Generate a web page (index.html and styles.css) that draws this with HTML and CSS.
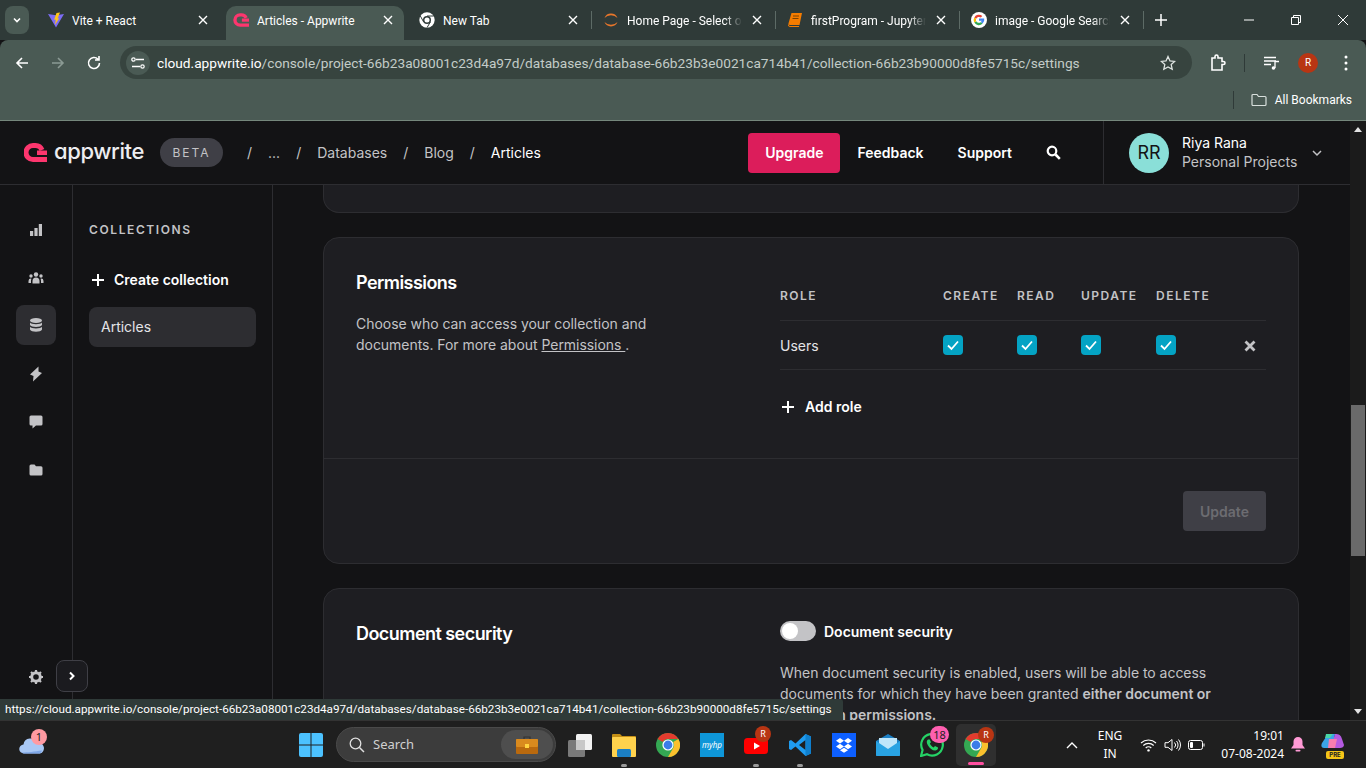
FILE: index.html
```html
<!DOCTYPE html>
<html lang="en">
<head>
  <meta charset="UTF-8" />
  <title>Articles - Appwrite</title>
  <link rel="stylesheet" href="styles.css">
</head>
<body>

  <svg class="defs" width="0" height="0">
    <symbol id="i-x" viewBox="0 0 10 10"><path d="M1 1l8 8M9 1l-8 8" fill="none" stroke="currentColor" stroke-width="1.4"/></symbol>
    <symbol id="i-chrome" viewBox="0 0 24 24">
      <circle cx="12" cy="12" r="12" fill="#34a853"/>
      <path d="M12 0a12 12 0 0 1 10.4 6H12a6 6 0 0 0-5.2 3L1.6 6A12 12 0 0 1 12 0z" fill="#e33b2e"/>
      <path d="M22.4 6A12 12 0 0 1 12 24l5.2-9a6 6 0 0 0 0-6z" fill="#fbc02d"/>
      <circle cx="12" cy="12" r="5.6" fill="#fff"/>
      <circle cx="12" cy="12" r="4.4" fill="#3b7de8"/>
    </symbol>
  </svg>

  <!-- Tab strip -->
  <div class="tabstrip">
    <div class="tab-menu"><svg width="10" height="10" viewBox="0 0 10 10"><path d="M2 3.5l3 3 3-3" fill="none" stroke="#fff" stroke-width="1.6"/></svg></div>
    <div class="tab tab-first">
      <svg class="tab-icon" viewBox="0 0 16 16"><path d="M0 2l8 13.5L16 2 8 3.2z" fill="#7c6cf5"/><path d="M8.5 1L12 .6 9.6 6.5l1.6-.3L7 13l.8-5.6-1.7.3z" fill="#ffc517"/></svg>
      <span class="tab-title">Vite + React</span>
      <svg class="tab-x"><use href="#i-x"/></svg>
    </div>
    <div class="tab tab-active">
      <svg class="tab-icon" viewBox="0 0 18 16"><path d="M18 13.800H8a5.800 5.800 0 0 1 0-11.600h1.500a5.800 5.800 0 0 1 5.300 3.400" fill="none" stroke="#fd366e" stroke-width="3.800"/><rect x="10" y="6.300" width="8" height="3.600" fill="#fd366e"/></svg>
      <span class="tab-title">Articles - Appwrite</span>
      <svg class="tab-x"><use href="#i-x"/></svg>
    </div>
    <div class="tab">
      <svg class="tab-icon" viewBox="0 0 24 24"><circle cx="12" cy="12" r="11.5" fill="#fff"/><circle cx="12" cy="12" r="6" fill="#2f3a38"/><circle cx="12" cy="12" r="3.800" fill="#fff"/><path d="M12 6h10M7 15L2 6M17 15l-5 8.500" stroke="#2f3a38" stroke-width="1.500"/></svg>
      <span class="tab-title">New Tab</span>
      <svg class="tab-x"><use href="#i-x"/></svg>
    </div>
    <div class="tab-sep"></div>
    <div class="tab">
      <svg class="tab-icon" viewBox="0 0 16 16"><path d="M1.5 6a7 7 0 0 1 13 0 9 9 0 0 0-13 0zM1.5 10a7 7 0 0 0 13 0 9 9 0 0 1-13 0z" fill="#e8762b"/></svg>
      <span class="tab-title tab-fade">Home Page - Select or create</span>
      <svg class="tab-x"><use href="#i-x"/></svg>
    </div>
    <div class="tab-sep"></div>
    <div class="tab">
      <svg class="tab-icon" viewBox="0 0 16 16"><path d="M4.5 1H15l-2.5 12H3a1.5 1.5 0 0 1-1.4-2z" fill="#f57c00"/><path d="M1.6 12.5a1.5 1.5 0 0 0 1.4 2h9" fill="none" stroke="#f57c00" stroke-width="1"/><path d="M6 4h6M5.5 6.5h6" stroke="#5a3200" stroke-width=".8"/></svg>
      <span class="tab-title tab-fade">firstProgram - Jupyter Notebook</span>
      <svg class="tab-x"><use href="#i-x"/></svg>
    </div>
    <div class="tab-sep"></div>
    <div class="tab">
      <svg class="tab-icon" viewBox="0 0 16 16"><circle cx="8" cy="8" r="8" fill="#fff"/><path d="M8 6.6h5.2a5.3 5.3 0 0 1-1.6 5L9.700 10a2.600 2.600 0 0 0 1-1.300H8z" fill="#4285f4"/><path d="M3.300 5.400l1.900 1.400a3 3 0 0 1 4.600-1.300l1.500-1.500a5.300 5.300 0 0 0-8 1.400z" fill="#ea4335"/><path d="M3.300 10.600l1.900-1.400a3 3 0 0 0 4.500 1l1.900 1.400a5.300 5.300 0 0 1-8.300-1z" fill="#34a853"/><path d="M3.300 5.400a5.300 5.300 0 0 0 0 5.200l1.900-1.400a3 3 0 0 1 0-2.400z" fill="#fbbc05"/></svg>
      <span class="tab-title tab-fade">image - Google Search</span>
      <svg class="tab-x"><use href="#i-x"/></svg>
    </div>
    <div class="tab-sep"></div>
    <svg class="tab-new" width="12" height="12" viewBox="0 0 12 12"><path d="M6 0v12M0 6h12" stroke="#fff" stroke-width="1.5"/></svg>
    <div class="win-btns">
      <svg width="10" height="10" viewBox="0 0 10 10"><path d="M0 5h10" stroke="#fff"/></svg>
      <svg width="10" height="10" viewBox="0 0 10 10"><path d="M.5 2.500h7v7h-7zM2.500 2.500V.5h7v7h-2" fill="none" stroke="#fff"/></svg>
      <svg width="10" height="10" viewBox="0 0 10 10"><path d="M0 0l10 10M10 0L0 10" stroke="#fff"/></svg>
    </div>
  </div>

  <!-- Toolbar -->
  <div class="toolbar">
    <div class="nav-row">
      <svg class="nav-btn" width="16" height="16" viewBox="0 0 16 16"><path d="M14 8H3M8 3L3 8l5 5" fill="none" stroke="#fff" stroke-width="1.6"/></svg>
      <svg class="nav-btn" width="16" height="16" viewBox="0 0 16 16"><path d="M2 8h11M8 3l5 5-5 5" fill="none" stroke="#8b9a94" stroke-width="1.6"/></svg>
      <svg class="nav-btn" width="16" height="16" viewBox="0 0 16 16"><path d="M13.500 8A5.500 5.500 0 1 1 12 4.200M13 1v4H9" fill="none" stroke="#fff" stroke-width="1.6"/></svg>
      <div class="omnibox">
        <span class="site-btn"><svg width="14" height="12" viewBox="0 0 14 12"><path d="M5 2.500h8M1 9.500h8" stroke="#fff" stroke-width="1.300"/><circle cx="2.500" cy="2.500" r="1.700" fill="none" stroke="#fff" stroke-width="1.200"/><circle cx="11.500" cy="9.500" r="1.700" fill="none" stroke="#fff" stroke-width="1.200"/></svg></span>
        <span class="url"><b>cloud.appwrite.io</b>/console/project-66b23a08001c23d4a97d/databases/database-66b23b3e0021ca714b41/collection-66b23b90000d8fe5715c/settings</span>
        <svg class="star" width="16" height="16" viewBox="0 0 16 16"><path d="M8 1.500l2 4.400 4.700.5-3.500 3.200 1 4.700L8 11.900l-4.200 2.400 1-4.700L1.300 6.400 6 5.900z" fill="none" stroke="#dfe5e2" stroke-width="1.300"/></svg>
      </div>
      <svg class="ext" width="16" height="18" viewBox="0 0 16 18"><path d="M2 4h3V2.500a1.500 1.500 0 0 1 3 0V4h4v3.500h1.500a1.500 1.500 0 0 1 0 3H12V16H2z" fill="none" stroke="#fff" stroke-width="1.600"/></svg>
      <span class="bar-sep"></span>
      <svg class="media" width="16" height="14" viewBox="0 0 16 14"><path d="M0 1.500h12M0 5h12M0 8.500h7" stroke="#fff" stroke-width="1.300"/><path d="M11 12V5.500h4" fill="none" stroke="#fff" stroke-width="1.300"/><circle cx="9.500" cy="12" r="1.800" fill="#fff"/></svg>
      <span class="profile-dot">R</span>
      <svg class="kebab" width="4" height="16" viewBox="0 0 4 16"><circle cx="2" cy="2" r="1.500" fill="#fff"/><circle cx="2" cy="8" r="1.500" fill="#fff"/><circle cx="2" cy="14" r="1.500" fill="#fff"/></svg>
    </div>
    <div class="bookmarks">
      <span class="bar-sep"></span>
      <svg width="16" height="14" viewBox="0 0 16 14"><path d="M1 2.500a1 1 0 0 1 1-1h4l1.500 2H14a1 1 0 0 1 1 1v7a1 1 0 0 1-1 1H2a1 1 0 0 1-1-1z" fill="none" stroke="#d8dfdc" stroke-width="1.200"/></svg>
      <span class="bm-label">All Bookmarks</span>
    </div>
  </div>

  <!-- Page -->
  <div class="app">
    <div class="page">
      <header class="head">
        <svg class="logo" width="23" height="19" viewBox="0 0 23 19"><path d="M23 16.500H9a7 7 0 0 1 0-14h2.500a7 7 0 0 1 6.500 4.500" fill="none" stroke="#fd366e" stroke-width="5"/><rect x="13" y="7.500" width="10" height="4.500" fill="#fd366e"/></svg>
        <span class="wordmark">appwrite</span>
        <span class="beta">BETA</span>
        <nav class="crumbs">
          <span class="slash">/</span><span>...</span>
          <span class="slash">/</span><span>Databases</span>
          <span class="slash">/</span><span>Blog</span>
          <span class="slash">/</span><span class="crumb-on">Articles</span>
        </nav>
        <button class="upgrade">Upgrade</button>
        <span class="head-link link-feedback">Feedback</span>
        <span class="head-link link-support">Support</span>
        <svg class="head-search" width="15" height="15" viewBox="0 0 15 15"><circle cx="6" cy="6" r="4.300" fill="none" stroke="#fff" stroke-width="2.200"/><path d="M9.500 9.500l4.300 4.300" stroke="#fff" stroke-width="2.600"/></svg>
        <div class="account">
          <span class="avatar">RR</span>
          <div class="who">
            <div class="who-name">Riya Rana</div>
            <div class="who-org">Personal Projects</div>
          </div>
          <svg width="10" height="8" viewBox="0 0 10 8"><path d="M1 2l4 4 4-4" fill="none" stroke="#c3c3c6" stroke-width="1.500"/></svg>
        </div>
      </header>

      <div class="body-row">
        <aside class="rail">
          <div class="rail-item"><svg width="16" height="16" viewBox="0 0 16 16"><path d="M2 9h3.200v5H2zM6.400 6h3.200v8H6.400zM10.800 2H14v12h-3.200z" fill="#c3c3c6"/></svg></div>
          <div class="rail-item"><svg width="16" height="16" viewBox="0 0 16 16"><circle cx="8" cy="4.500" r="2.200" fill="#c3c3c6"/><circle cx="3" cy="6" r="1.700" fill="#c3c3c6"/><circle cx="13" cy="6" r="1.700" fill="#c3c3c6"/><path d="M4.500 13.500V11a3.500 3.500 0 0 1 7 0v2.500zM.5 13v-2a2.500 2.500 0 0 1 3-2.300 5 5 0 0 0-.5 2.300v2zM15.500 13v-2a2.500 2.500 0 0 0-3-2.300 5 5 0 0 1 .5 2.300v2z" fill="#c3c3c6"/></svg></div>
          <div class="rail-item rail-on"><svg width="16" height="16" viewBox="0 0 16 16"><ellipse cx="8" cy="3.500" rx="6" ry="2.500" fill="#c3c3c6"/><path d="M2 5.500c1 2.300 11 2.300 12 0V8c-1 2.500-11 2.500-12 0zM2 9.800c1 2.300 11 2.300 12 0v2.700c-1 3-11 3-12 0z" fill="#c3c3c6"/></svg></div>
          <div class="rail-item"><svg width="16" height="16" viewBox="0 0 16 16"><path d="M10.500.5L2 8.500 5.500 10 5 15.500l9-8.500-3.500-1.500z" fill="#c3c3c6"/></svg></div>
          <div class="rail-item"><svg width="16" height="16" viewBox="0 0 16 16"><path d="M1.500 3a1.500 1.500 0 0 1 1.500-1.500h10A1.500 1.500 0 0 1 14.500 3v7a1.500 1.500 0 0 1-1.500 1.500H8L4.500 14.500v-3H3A1.500 1.500 0 0 1 1.500 10z" fill="#c3c3c6"/></svg></div>
          <div class="rail-item"><svg width="16" height="16" viewBox="0 0 16 16"><path d="M1.500 4a1.500 1.500 0 0 1 1.500-1.500h3.500L8 4.300h5A1.500 1.500 0 0 1 14.500 5.800V12a1.500 1.500 0 0 1-1.500 1.500H3A1.500 1.500 0 0 1 1.500 12z" fill="#c3c3c6"/></svg></div>
          <div class="rail-gear"><svg width="16" height="16" viewBox="0 0 16 16"><circle cx="8" cy="8" r="4.300" fill="none" stroke="#c3c3c6" stroke-width="3"/><path d="M8 1v14M1 8h14M3 3l10 10M13 3L3 13" stroke="#c3c3c6" stroke-width="2.200" stroke-dasharray="2.200 9.800 2.200"/></svg></div>
          <div class="rail-expand"><svg width="10" height="10" viewBox="0 0 10 10"><path d="M3 1.500L6.500 5 3 8.500" fill="none" stroke="#fff" stroke-width="2"/></svg></div>
        </aside>

        <aside class="sub">
          <div class="sub-title">COLLECTIONS</div>
          <div class="sub-create">
            <svg width="12" height="12" viewBox="0 0 12 12"><path d="M6 0v12M0 6h12" stroke="#fff" stroke-width="2"/></svg>
            Create collection
          </div>
          <div class="sub-item">Articles</div>
        </aside>

        <main class="main">
          <div class="stub"></div>

          <section class="card">
            <div class="card-body">
              <div class="card-left">
                <h2>Permissions</h2>
                <p>Choose who can access your collection and documents. For more about <u>Permissions </u>.</p>
              </div>
              <div class="card-right">
                <div class="perm-row perm-head">
                  <span>ROLE</span><span>CREATE</span><span>READ</span><span>UPDATE</span><span>DELETE</span><span></span>
                </div>
                <div class="perm-row perm-user">
                  <span>Users</span>
                  <span class="check"><svg width="14" height="12" viewBox="0 0 14 12"><path d="M2 6.500l3.500 3.500L12 2.500" fill="none" stroke="#fff" stroke-width="1.800"/></svg></span>
                  <span class="check"><svg width="14" height="12" viewBox="0 0 14 12"><path d="M2 6.500l3.500 3.500L12 2.500" fill="none" stroke="#fff" stroke-width="1.800"/></svg></span>
                  <span class="check"><svg width="14" height="12" viewBox="0 0 14 12"><path d="M2 6.500l3.500 3.500L12 2.500" fill="none" stroke="#fff" stroke-width="1.800"/></svg></span>
                  <span class="check"><svg width="14" height="12" viewBox="0 0 14 12"><path d="M2 6.500l3.500 3.500L12 2.500" fill="none" stroke="#fff" stroke-width="1.800"/></svg></span>
                  <svg class="perm-x" width="12" height="12" viewBox="0 0 12 12"><path d="M1.500 1.500l9 9M10.500 1.500l-9 9" stroke="#c3c3c6" stroke-width="2.800"/></svg>
                </div>
                <div class="add-role">
                  <svg width="12" height="12" viewBox="0 0 12 12"><path d="M6 0v12M0 6h12" stroke="#fff" stroke-width="2"/></svg>
                  Add role
                </div>
              </div>
            </div>
            <div class="card-foot"><button class="update">Update</button></div>
          </section>

          <section class="card">
            <div class="card-body">
              <div class="card-left"><h2>Document security</h2></div>
              <div class="card-right">
                <div class="toggle-row"><span class="toggle"></span>Document security</div>
                <p class="sec-text">When document security is enabled, users will be able to access documents for which they have been granted <b>either document or collection permissions.</b></p>
              </div>
            </div>
          </section>
        </main>
      </div>
    </div>

    <div class="scrollbar">
      <svg width="8" height="5" viewBox="0 0 8 5"><path d="M4 0l4 5H0z" fill="#e4e4e4"/></svg>
      <div class="scroll-thumb"></div>
      <svg width="8" height="5" viewBox="0 0 8 5"><path d="M0 0h8L4 5z" fill="#e4e4e4"/></svg>
    </div>

    <div class="status">https://cloud.appwrite.io/console/project-66b23a08001c23d4a97d/databases/database-66b23b3e0021ca714b41/collection-66b23b90000d8fe5715c/settings</div>
  </div>

  <!-- Windows taskbar -->
  <footer class="taskbar">
    <div class="tb-weather">
      <svg width="26" height="16" viewBox="0 0 26 16"><path d="M5 15.500a4.500 4.500 0 0 1-.5-9A7 7 0 0 1 18 5a5.300 5.300 0 0 1 3 10.500z" fill="#a9c8f5"/><path d="M5 15.500a4.500 4.500 0 0 1-2-1c5 0 13-1 20-2a5 5 0 0 1-2 3z" fill="#7ea6e6"/></svg>
      <span class="tb-weather-n">1</span>
    </div>
    <div class="tb-slot tb-win">
      <svg width="24" height="24" viewBox="0 0 24 24"><path d="M0 2a2 2 0 0 1 2-2h9.500v11.500H0zM12.500 0H22a2 2 0 0 1 2 2v9.500H12.500zM0 12.500h11.500V24H2a2 2 0 0 1-2-2zM12.500 12.500H24V22a2 2 0 0 1-2 2h-9.500z" fill="#4cc2ff"/></svg>
    </div>
    <div class="tb-search">
      <svg width="16" height="16" viewBox="0 0 16 16"><circle cx="6.500" cy="6.500" r="5.300" fill="none" stroke="#e0e0e0" stroke-width="1.300"/><path d="M10.500 10.500l4.500 4.500" stroke="#e0e0e0" stroke-width="1.500"/></svg>
      <span class="tb-search-label">Search</span>
      <span class="tb-case"><svg width="22" height="18" viewBox="0 0 22 18"><path d="M8 3V1h6v2" fill="none" stroke="#333" stroke-width="1.200"/><rect y="3" width="22" height="15" rx="1" fill="#b9690e"/><rect y="3" width="22" height="8" rx="1" fill="#d98a1e"/><rect x="9" y="8" width="4" height="4" fill="#ffd23f"/></svg></span>
    </div>
    <div class="tb-slot">
      <svg width="24" height="24" viewBox="0 0 24 24"><rect x="8" y="1" width="16" height="16" rx="1.500" fill="#f2f2f2"/><rect y="7" width="17" height="17" rx="1.500" fill="#7a7a7a"/><rect x="8" y="7" width="9" height="10" fill="#c8c8c8"/></svg>
    </div>
    <div class="tb-slot tb-open">
      <svg width="24" height="24" viewBox="0 0 24 24"><path d="M0 2a1 1 0 0 1 1-1h7l2 2h13a1 1 0 0 1 1 1v4H0z" fill="#c48f16"/><rect y="4" width="24" height="20" rx="1" fill="#ffd24d"/><rect x="5" y="16" width="14" height="8" rx="1.500" fill="#1b7fc4"/></svg>
    </div>
    <div class="tb-slot"><svg width="24" height="24"><use href="#i-chrome"/></svg></div>
    <div class="tb-slot">
      <span class="tb-hp">myhp</span>
    </div>
    <div class="tb-slot tb-open">
      <svg width="24" height="24" viewBox="0 0 24 24"><rect y="5" width="24" height="16" rx="3.500" fill="#f00"/><path d="M10 9.500l6 3.500-6 3.500z" fill="#fff"/></svg>
      <span class="tb-r tb-r-yt">R</span>
    </div>
    <div class="tb-slot tb-open">
      <svg width="24" height="24" viewBox="0 0 24 24"><path d="M17.500 1L7.500 10.500 3 7 1 8v8l2 1 4.500-3.500 10 9.500 5.500-2.500V3.500zM17.500 7v10l-6.500-5z" fill="#1f9cf0"/><path d="M17.500 1L23 3.500v17L17.500 23z" fill="#0f7fcd"/></svg>
    </div>
    <div class="tb-slot">
      <svg width="24" height="24" viewBox="0 0 24 24"><rect width="24" height="24" fill="#0d5fff"/><path d="M8 5l4 2.700L8 10.400 4 7.700zM16 5l4 2.700-4 2.700-4-2.700zM8 10.800l4 2.700-4 2.700-4-2.700zM16 10.800l4 2.700-4 2.700-4-2.700zM8 17.300l4-2.500 4 2.500-4 2.500z" fill="#fff"/></svg>
    </div>
    <div class="tb-slot">
      <svg width="24" height="24" viewBox="0 0 24 24"><path d="M0 8l12-7 12 7v14a1 1 0 0 1-1 1H1a1 1 0 0 1-1-1z" fill="#1b7fc4"/><path d="M3 5h18v9l-9 5-9-5z" fill="#bfe6fa"/><path d="M0 8l12 8 12-8v14a1 1 0 0 1-1 1H1a1 1 0 0 1-1-1z" fill="#29a3e3"/></svg>
    </div>
    <div class="tb-slot">
      <svg width="24" height="24" viewBox="0 0 24 24"><path d="M1 23l1.600-6A10.800 10.800 0 1 1 7 21.300z" fill="none" stroke="#25d366" stroke-width="2.200"/><path d="M8 6.500c-1.500 1-1.800 3 0 6s4.500 5.200 7.500 5c2-.3 2.800-2 2.500-3l-3-1.500-1.300 1.500c-2-1-3-2-3.900-3.900l1.200-1.400L9.700 6.500z" fill="#25d366"/></svg>
      <span class="tb-pink">18</span>
    </div>
    <div class="tb-slot tb-active">
      <svg width="24" height="24"><use href="#i-chrome"/></svg>
      <span class="tb-r tb-r-ch">R</span>
    </div>

    <div class="tb-tray">
      <svg class="tray-up" width="12" height="8" viewBox="0 0 12 8"><path d="M1 7l5-5 5 5" fill="none" stroke="#fff" stroke-width="1.400"/></svg>
      <div class="tray-lang">ENG<br>IN</div>
      <div class="tray-icons">
        <svg width="17" height="14" viewBox="0 0 17 14"><path d="M1 5a11 11 0 0 1 15 0M3.300 7.500a7.500 7.500 0 0 1 10.400 0M5.700 10a4 4 0 0 1 5.600 0" fill="none" stroke="#fff" stroke-width="1.100"/><circle cx="8.500" cy="12.400" r="1.200" fill="#fff"/></svg>
        <svg width="17" height="14" viewBox="0 0 17 14"><path d="M1 4.700h3L8 1.500v11l-4-3.200H1z" fill="none" stroke="#fff" stroke-width="1"/><path d="M10.500 4.500a3.500 3.500 0 0 1 0 5M12.500 3a6 6 0 0 1 0 8M14.500 1.500a8.500 8.500 0 0 1 0 11" fill="none" stroke="#fff" stroke-width="1"/></svg>
        <svg width="17" height="12" viewBox="0 0 17 12"><rect x=".5" y="1.500" width="14" height="9" rx="2" fill="none" stroke="#fff"/><rect x="2" y="3" width="3" height="6" rx="1" fill="#fff"/><path d="M15.500 4.500h1v3h-1z" fill="#fff"/></svg>
      </div>
      <div class="tray-clock">19:01<br>07-08-2024</div>
      <svg class="tray-bell" width="14" height="15" viewBox="0 0 14 15"><path d="M7 0a4.500 4.500 0 0 1 4.500 4.500V8L14 11.500H0L2.500 8V4.500A4.500 4.500 0 0 1 7 0z" fill="#ff9ad5"/><rect x="4.500" y="12.700" width="5" height="1.800" rx=".9" fill="#ff9ad5"/></svg>
      <div class="tray-copilot">
        <svg width="24" height="18" viewBox="0 0 24 18"><path d="M7 1h7l-3 14H3C0 15 0 12 1 10z" fill="#3ba4e8"/><path d="M14 1c4 0 6 1 7 5l2 6c0 2-2 3-4 3h-9z" fill="#b45ae0"/><path d="M8 6h8l-2 9H7z" fill="#f77db0"/><path d="M5 1h7L9 5H4z" fill="#49d6a8"/></svg>
        <span class="pre">PRE</span>
      </div>
    </div>
  </footer>

</body>
</html>
```

FILE: styles.css
```css
* { box-sizing: border-box; }
html, body { margin: 0; height: 100%; overflow: hidden; }
body { width: 1366px; height: 768px; display: flex; flex-direction: column; font-family: "Inter", sans-serif; background: #131315; }
.defs { position: absolute; }

/* browser tabs */
.tabstrip { height: 40px; flex: none; display: flex; align-items: flex-end; background: #2f3a38; color: #fff; font: 12px "Roboto", sans-serif; }
.tab-menu { width: 24px; height: 28px; margin: 0 11px 6px 5px; border-radius: 8px; background: #4a5a54; display: flex; align-items: center; justify-content: center; }
.tab { width: 184px; height: 34px; padding: 0 14px 6px 11px; display: flex; align-items: center; flex: none; }
.tab-first { padding-left: 8px; padding-right: 16px; }
.tab-active { width: 178px; margin: 0 4px 0 2px; padding: 0 11px 6px 7px; background: #4a5a54; border-radius: 10px 10px 0 0; }
.tab-icon { width: 16px; height: 16px; margin-right: 8px; flex: none; }
.tab-title { flex: 1; padding-top: 1px; overflow: hidden; white-space: nowrap; }
.tab-fade { -webkit-mask-image: linear-gradient(90deg, #000 85%, transparent); mask-image: linear-gradient(90deg, #000 85%, transparent); }
.tab-x { width: 10px; height: 10px; margin-left: 10px; flex: none; color: #fff; }
.tab-sep { width: 1px; height: 18px; margin: 0 0 11px -1px; background: #5d6b66; flex: none; }
.tab-new { margin: 0 0 14px 11px; flex: none; }
.win-btns { margin: 0 0 15px auto; padding-right: 18px; display: flex; gap: 37px; }

/* browser toolbar */
.toolbar { height: 81px; flex: none; background: #4a5a54; border-bottom: 1px solid #75877c; border-radius: 8px 8px 0 0; color: #fff; font-family: "Roboto", sans-serif; }
.nav-row { height: 39px; padding: 6px 14px 0 14px; display: flex; align-items: center; }
.nav-btn { margin-right: 20px; flex: none; }
.nav-btn:nth-child(3) { margin-right: 18px; }
.omnibox { width: 1072px; height: 33px; border-radius: 17px; background: #37443f; display: flex; align-items: center; padding: 0 16px 0 6px; flex: none; }
.site-btn { width: 24px; height: 24px; border-radius: 50%; background: #4a5a54; display: flex; align-items: center; justify-content: center; margin-right: 7px; flex: none; }
.url { flex: 1; font-size: 13.68px; color: #c3ccc8; white-space: nowrap; overflow: hidden; }
.url b { font-weight: 400; color: #fff; }
.ext { margin-left: 18px; flex: none; }
.bar-sep { width: 1px; height: 18px; background: #2f3a38; flex: none; }
.nav-row .bar-sep { margin: 0 19px 0 18px; }
.media { flex: none; }
.profile-dot { width: 20px; height: 20px; margin: 0 26px 0 18px; border-radius: 50%; background: #b83513; font-size: 10px; display: flex; align-items: center; justify-content: center; flex: none; }
.kebab { flex: none; }
.bookmarks { height: 41px; display: flex; align-items: center; justify-content: flex-end; padding-right: 14px; gap: 8px; font-size: 12px; }
.bookmarks .bar-sep { margin-right: 9px; }

/* app frame */
.app { position: relative; flex: 1; min-height: 0; display: flex; overflow: hidden; }
.page { flex: 1; min-width: 0; display: flex; flex-direction: column; }
.head { height: 64px; flex: none; display: flex; align-items: center; padding-left: 24px; border-bottom: 1px solid #2d2d31; background: #131315; color: #fff; font-size: 14px; }
.logo { flex: none; }
.wordmark { width: 90px; margin: -3px 0 0 7px; font-size: 22px; font-weight: 500; line-height: 1; color: #ededf0; font-feature-settings: "cv11"; letter-spacing: -.4px; white-space: nowrap; }
.beta { width: 63px; height: 29px; margin-left: 16px; border-radius: 15px; background: #3f3f46; color: #c3c3c6; font-size: 12px; letter-spacing: 2px; display: flex; align-items: center; justify-content: center; }
.crumbs { margin-left: 24px; display: flex; gap: 16px; color: #c3c3c6; }
.crumb-on { color: #fff; }
.upgrade { width: 92px; height: 40px; margin-left: auto; border: 0; border-radius: 4px; background: #dc1d5b; color: #fff; font: 600 14px "Inter", sans-serif; }
.head-link { font-weight: 600; }
.link-feedback { margin-left: 17px; }
.link-support { margin-left: 34px; }
.head-search { margin-left: 34px; }
.account { width: 247px; height: 63px; margin-left: 42px; padding-left: 25px; border-left: 1px solid #2d2d31; display: flex; align-items: center; }
.avatar { width: 40px; height: 40px; border-radius: 50%; background: #8adfd8; color: #131315; font-size: 18px; display: flex; align-items: center; justify-content: center; flex: none; }
.who { width: 130px; margin: -2px 0 0 13px; line-height: 19px; }
.who-org { color: #c3c3c6; }
.body-row { flex: 1; min-height: 0; display: flex; }

/* left rail */
.rail { position: relative; width: 73px; flex: none; border-right: 1px solid #2d2d31; padding: 24px 16px 0; display: flex; flex-direction: column; gap: 8px; }
.rail-item { width: 40px; height: 40px; border-radius: 8px; display: flex; align-items: center; justify-content: center; }
.rail-item svg { margin-top: 2px; }
.rail-on { background: #2d2d31; }
.rail-on svg { margin-top: 0; }
.rail-gear { margin-top: auto; margin-bottom: 35px; width: 40px; height: 16px; display: flex; justify-content: center; }
.rail-expand { position: absolute; left: 56px; bottom: 28px; width: 32px; height: 32px; border: 1px solid #3f3f46; border-radius: 8px; background: #1b1b1f; display: flex; align-items: center; justify-content: center; }

/* collections sidebar */
.sub { width: 200px; flex: none; padding: 37px 16px 0; border-right: 1px solid #2d2d31; }
.sub-title { font-size: 12px; line-height: 16px; font-weight: 600; letter-spacing: 1.6px; color: #c3c3c6; }
.sub-create { margin: 32px 0 0 3px; display: flex; align-items: center; gap: 10px; color: #fff; font-size: 14px; font-weight: 600; line-height: 20px; }
.sub-item { height: 40px; margin-top: 17px; padding-left: 12px; border-radius: 8px; background: #2d2d31; color: #e4e4e7; font-size: 14px; line-height: 40px; }

/* settings cards */
.main { flex: 1; min-width: 0; padding: 0 51px 0 50px; overflow: hidden; }
.stub { height: 28px; margin-bottom: 24px; background: #1e1e22; border: 1px solid #2d2d31; border-top: 0; border-radius: 0 0 16px 16px; }
.card { margin-bottom: 24px; background: #1e1e22; border: 1px solid #2d2d31; border-radius: 16px; }
.card-body { display: flex; padding: 32px 32px 0; height: 220px; }
.card-left { width: 424px; flex: none; padding-top: 1px; }
.card-right { flex: 1; min-width: 0; }
.card h2 { margin: 0; font-size: 18px; line-height: 24px; font-weight: 600; color: #fff; letter-spacing: -.55px; }
.card-left p { width: 310px; margin: 18px 0 0; font-size: 14px; line-height: 21px; color: #c3c3c6; letter-spacing: -.04px; }
.perm-row { display: grid; grid-template-columns: 163px 74px 64px 75px 1fr 22px; align-items: center; }
.perm-head { height: 51px; font-size: 12px; font-weight: 600; letter-spacing: 1.5px; color: #c3c3c6; border-bottom: 1px solid #2d2d31; }
.perm-user { height: 49px; font-size: 14px; color: #e4e4e7; border-bottom: 1px solid #2d2d31; }
.check { width: 20px; height: 20px; border-radius: 4px; background: #04a3c4; display: flex; align-items: center; justify-content: center; }
.perm-x { justify-self: start; margin-top: 2px; }
.add-role { margin: 27px 0 0 2px; display: flex; align-items: center; gap: 11px; color: #fff; font-size: 14px; font-weight: 600; line-height: 20px; }
.card-foot { height: 105px; border-top: 1px solid #2d2d31; padding: 32px; display: flex; justify-content: flex-end; }
.update { width: 83px; height: 40px; border: 0; border-radius: 4px; background: #3f3f46; color: #6c6c71; font: 600 14px "Inter", sans-serif; }
.toggle-row { height: 24px; margin-top: -2px; display: flex; align-items: center; gap: 8px; color: #fff; font-size: 14px; font-weight: 600; }
.toggle { position: relative; width: 36px; height: 20px; border-radius: 10px; background: #c3c3c6; }
.toggle::after { content: ""; position: absolute; left: 2px; top: 2px; width: 16px; height: 16px; border-radius: 50%; background: #fff; }
.sec-text { margin: 19px 0 0; font-size: 14px; line-height: 21px; color: #c3c3c6; letter-spacing: -.03px; }
.sec-text b { font-weight: 600; }

/* scrollbar + link status */
.scrollbar { width: 16px; flex: none; background: #1b1b1b; display: flex; flex-direction: column; align-items: center; justify-content: space-between; padding: 6px 0; position: relative; }
.scroll-thumb { position: absolute; top: 284px; left: 1px; width: 14px; height: 151px; background: #6a6a6a; }
.status { position: absolute; left: 0; bottom: 0; width: 843px; height: 21px; padding-left: 5px; background: #2f3a38; color: #fff; font: 11.7px/21px "Roboto", sans-serif; white-space: nowrap; border-radius: 0 3px 0 0; }

/* taskbar */
.taskbar { height: 48px; flex: none; display: flex; align-items: center; background: #1f1f1f; border-top: 1px solid #333; color: #fff; font-family: "Noto Sans", sans-serif; }
.tb-weather { position: relative; width: 289px; padding: 7px 0 0 19px; flex: none; }
.tb-weather-n { position: absolute; left: 31px; top: -1px; width: 16px; height: 16px; border-radius: 50%; background: #ff9aa2; color: #222; font-size: 11px; line-height: 16px; text-align: center; }
.tb-slot { position: relative; width: 44px; height: 47px; flex: none; display: flex; align-items: center; justify-content: center; }
.tb-search { width: 220px; height: 35px; margin: 0 2px 0 3px; padding-left: 12px; border-radius: 18px; background: #3c3c3c; border: 1px solid #4a4a4a; display: flex; align-items: center; flex: none; }
.tb-search-label { margin: -1px 0 0 8px; font-size: 13px; color: #d0d0d0; }
.tb-case { width: 52px; height: 29px; margin-left: auto; margin-right: 2px; border-radius: 15px; background: #4e4e4e; display: flex; align-items: center; justify-content: center; }
.tb-open::after { content: ""; position: absolute; left: 19px; bottom: 1px; width: 6px; height: 3px; border-radius: 2px; background: #9a9a9a; }
.tb-hp { width: 24px; height: 24px; background: #0e96d8; color: #fff; font-size: 8px; font-style: italic; line-height: 24px; text-align: center; }
.tb-r { position: absolute; width: 16px; height: 16px; border-radius: 50%; background: #b83513; color: #fff; font-size: 9px; line-height: 16px; text-align: center; }
.tb-r-yt { left: 21px; top: 5px; }
.tb-r-ch { left: 22px; top: 3px; }
.tb-pink { position: absolute; left: 20px; top: 5px; width: 19px; height: 17px; border-radius: 9px; background: #ff5fb0; color: #222; font-size: 11px; line-height: 17px; text-align: center; }
.tb-active { width: 40px; height: 42px; margin-left: 2px; border-radius: 5px; background: #2f2f2f; }
.tb-active::after { content: ""; position: absolute; left: 12px; bottom: 1px; width: 16px; height: 3px; border-radius: 2px; background: #ff4fa0; }
.tb-tray { flex: 1; display: flex; align-items: center; font-size: 12px; }
.tray-up { margin-left: 70px; }
.tray-lang { width: 48px; margin-left: 8px; line-height: 18px; text-align: center; }
.tray-icons { margin-left: 6px; display: flex; align-items: center; gap: 7px; }
.tray-clock { width: 69px; margin-left: 10px; text-align: right; line-height: 18px; }
.tray-bell { margin-left: 7px; }
.tray-copilot { position: relative; width: 24px; height: 24px; margin-left: 16px; }
.pre { position: absolute; left: 5px; bottom: -2px; width: 18px; height: 8px; border-radius: 2px; background: #f5c518; color: #222; font: 700 6px/8px "Inter", sans-serif; text-align: center; }
```
